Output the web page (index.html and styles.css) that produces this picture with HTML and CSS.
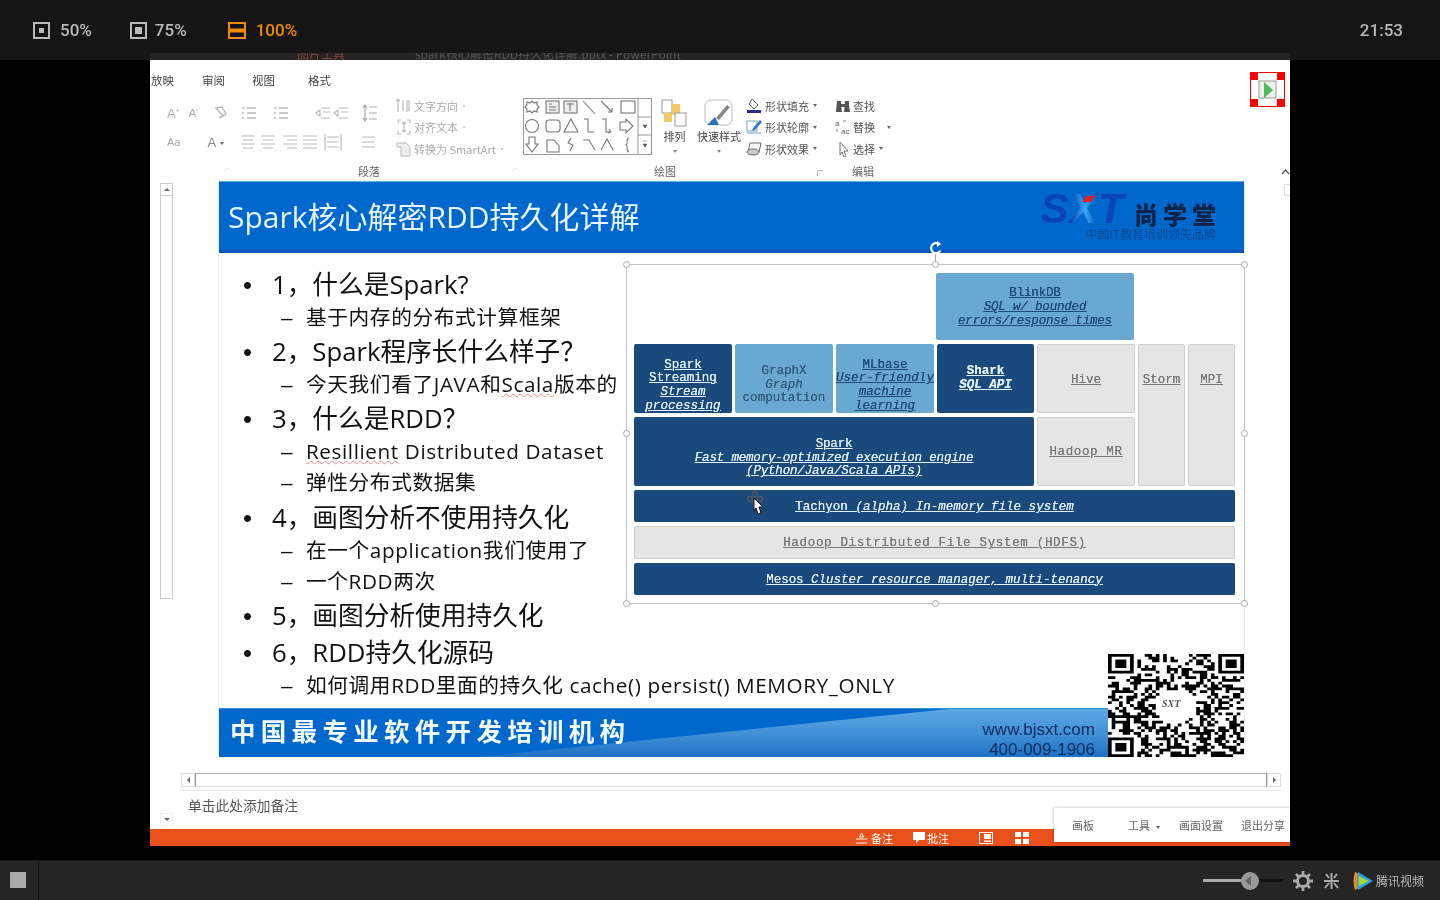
FILE: index.html
```html
<!DOCTYPE html>
<html>
	<head>
		<meta charset="UTF-8">
		<title>Spark核心解密RDD持久化详解</title>
		<link rel="stylesheet" href="styles.css">
	</head>
	<body>
		<header class="topbar">
			<div class="topbar-row">
				<div class="zoom-opt z50"><svg width="17" height="17" viewBox="0 0 17 17"><rect x="1" y="1" width="15" height="15" fill="none" stroke="#bbb" stroke-width="2"/><rect x="6" y="6" width="5" height="5" fill="#bbb"/></svg>50%</div>
				<div class="zoom-opt z75"><svg width="17" height="17" viewBox="0 0 17 17"><rect x="1" y="1" width="15" height="15" fill="none" stroke="#bbb" stroke-width="2"/><rect x="5" y="5" width="7" height="7" fill="#bbb"/></svg>75%</div>
				<div class="zoom-opt active"><svg width="18" height="17" viewBox="0 0 18 17"><rect x="1" y="1" width="16" height="15" fill="none" stroke="#f08a00" stroke-width="2"/><rect x="1" y="6.500" width="16" height="4" fill="#f08a00"/></svg>100%</div>
				<div class="clock">21:53</div>
			</div>
			<div class="titlestrip">
				<span class="tool-title">图片工具</span>
				<span class="doc-title">spark核心解密RDD持久化详解.pptx - PowerPoint</span>
			</div>
		</header>

		<main class="stage">
			<div class="win">
				<nav class="tabs">
					<span class="tab t1">放映</span>
					<span class="tab t2">审阅</span>
					<span class="tab t3">视图</span>
					<span class="tab t4">格式</span>
				</nav>

				<svg class="rec-badge" width="35" height="35" viewBox="0 0 35 35">
					<rect width="35" height="35" fill="#f00"/>
					<rect x="1" y="8" width="33" height="19" fill="#fff"/>
					<rect x="8" y="1" width="19" height="33" fill="#fff"/>
					<rect x="9" y="9" width="17" height="17" fill="#eee" stroke="#999"/>
					<path d="M14 10l9 8-9 8z" fill="#4cbb5a"/>
				</svg>

				<section class="ribbon">
					<div class="grp grp-font">
						<div class="ico-row r1">
							<span class="glyph">A<sup>+</sup></span>
							<span class="glyph small">A<sup>-</sup></span>
							<svg width="16" height="16" viewBox="0 0 16 16"><path d="M3 3l7 8 3-2-4-7zM6 13l4-2" fill="none" stroke="#bbb" stroke-width="1.5"/></svg>
						</div>
						<div class="ico-row r2">
							<span class="glyph light">Aa</span>
							<span class="glyph dark">A<i class="caret"></i></span>
						</div>
						<i class="launch faint"></i>
					</div>

					<div class="grp grp-para">
						<div class="para-icons">
							<div class="ico-row r1">
								<svg width="50" height="14" viewBox="0 0 50 14"><path d="M1 2h2M6 2h9M1 7h2M6 7h9M1 12h2M6 12h9M33 2h2M38 2h9M33 7h2M38 7h9M33 12h2M38 12h9" stroke="#bbb" stroke-width="1.3"/></svg>
								<svg class="gap1" width="34" height="14" viewBox="0 0 34 14"><path d="M1 7l4-3v6zM6 2h9M8 6h7M6 12h9M19 7l4-3v6zM24 2h9M26 6h7M24 12h9" fill="none" stroke="#bbb" stroke-width="1.2"/></svg>
								<svg class="gap2" width="16" height="18" viewBox="0 0 16 18"><path d="M3 1v16M1 4l2-3 2 3M1 14l2 3 2-3M7 3h8M7 9h8M7 15h8" fill="none" stroke="#aaa" stroke-width="1.2"/></svg>
							</div>
							<div class="ico-row r2">
								<svg width="102" height="16" viewBox="0 0 102 16"><path d="M0 2h14M2 6h10M0 10h14M2 14h10M20 2h14M22 6h10M20 10h14M22 14h10M42 2h14M46 6h10M42 10h14M46 14h10M62 2h14M62 6h14M62 10h14M62 14h14M84 0v16M100 0v16M86 3h12M86 8h12M86 13h12" stroke="#bbb" stroke-width="1.2" fill="none"/></svg>
								<svg class="gap3" width="14" height="14" viewBox="0 0 14 14"><path d="M0 2h13M0 7h13M0 12h13" stroke="#bbb" stroke-width="1.2"/></svg>
							</div>
						</div>
						<div class="text-cmds off">
							<div class="cmd"><svg width="16" height="16" viewBox="0 0 16 16"><path d="M2 1v13M0 3l2-2 2 2M7 2v11M11 2v12M13 2v11" fill="none" stroke="#bbb" stroke-width="1.2"/></svg>文字方向<i class="dot"></i></div>
							<div class="cmd"><svg width="16" height="16" viewBox="0 0 16 16"><path d="M2 4V1h3M11 1h3v3M2 12v3h3M11 15h3v-3M8 3v10M6 5l2-2 2 2M6 11l2 2 2-2" fill="none" stroke="#bbb" stroke-width="1.2"/></svg>对齐文本<i class="dot"></i></div>
							<div class="cmd"><svg width="16" height="16" viewBox="0 0 16 16"><path d="M1 2h9l4 4v9H5V6H1z" fill="#eee" stroke="#bbb"/></svg>转换为 SmartArt<i class="dot"></i></div>
						</div>
						<span class="grp-label">段落</span>
						<i class="launch faint"></i>
					</div>

					<div class="grp grp-draw">
						<svg class="gallery" width="129" height="57" viewBox="0 0 129 57">
							<rect x=".5" y=".5" width="128" height="56" fill="#fff" stroke="#999"/>
							<g fill="none" stroke="#777" stroke-width="1.1">
								<path d="M9 3l2 2 3-1 0 3 2 2-2 2 0 3-3-1-2 2-2-2-3 1 0-3-2-2 2-2 0-3 3 1z"/>
								<rect x="23" y="3" width="13" height="12" fill="#eee"/><path d="M26 6h3M26 9h7M26 12h7"/>
								<rect x="41" y="3" width="13" height="12" fill="#eee"/><path d="M47 5v8M44 6h7"/>
								<path d="M60 3l12 13M78 3l11 11M89 14v-4M89 14h-4"/>
								<rect x="98" y="3" width="14" height="12"/>
								<circle cx="9" cy="28" r="6.500"/>
								<rect x="23" y="22" width="14" height="12" rx="3"/>
								<path d="M48 21l7 13H41z"/>
								<path d="M61 21h4v13h6M79 21h4v13h5M86 31l2 3-3 1"/>
								<path d="M97 24h6v-3l7 7-7 7v-3h-6z"/>
								<path d="M6 39h6v7h3l-6 8-6-8h3z"/>
								<path d="M24 42h7l5 6v6H24z"/>
								<path d="M48 40l-3 5 5 2-3 6"/>
								<path d="M60 42h6l6 10M78 52l6-11 6 11M106 40c-4 1 0 6-3 7 3 1-1 6 3 7"/>
							</g>
							<g fill="none" stroke="#999">
								<path d="M115 .5v56M115 19h13M115 37h13"/>
							</g>
							<path d="M120 27h4l-2 3zM120 46h4l-2 3zM120 43h4" fill="#555" stroke="#555" stroke-width=".5"/>
						</svg>
						<div class="big-btn arrange">
							<svg width="28" height="28" viewBox="0 0 28 28"><rect x="1" y="1" width="10" height="13" fill="#fff" stroke="#999"/><rect x="11" y="5" width="8" height="11" fill="#f3c762"/><rect x="3" y="14" width="8" height="9" fill="#f3c762"/><rect x="14" y="14" width="11" height="13" fill="#fff" stroke="#999"/></svg>
							<span>排列</span>
							<i class="caret"></i>
						</div>
						<div class="big-btn quick">
							<svg width="30" height="28" viewBox="0 0 30 28"><rect x="1" y="1" width="27" height="25" rx="6" fill="#fff" stroke="#bbb"/><path d="M23 6L12 19l3 2L26 8z" fill="#888"/><path d="M3 26l8-8 4 8z" fill="#2f6fb5"/></svg>
							<span>快速样式</span>
							<i class="caret"></i>
						</div>
						<div class="text-cmds shape">
							<div class="cmd"><svg width="17" height="16" viewBox="0 0 17 16"><path d="M6 1l6 6-4 4-5-5z" fill="#fff" stroke="#666"/><rect x="1" y="12" width="14" height="3" fill="#2b2b8f"/></svg>形状填充<i class="caret"></i></div>
							<div class="cmd"><svg width="17" height="16" viewBox="0 0 17 16"><rect x="1" y="2" width="10" height="10" fill="none" stroke="#7ab"/><path d="M14 1L7 9l-1 3 3-1 7-8z" fill="#3a78c2"/><path d="M1 14h14" stroke="#bcd" stroke-width="2"/></svg>形状轮廓<i class="caret"></i></div>
							<div class="cmd"><svg width="17" height="16" viewBox="0 0 17 16"><path d="M4 2h11l-2 9H2z" fill="#fff" stroke="#666"/><ellipse cx="7" cy="11" rx="6" ry="3" fill="#ccc" stroke="#666"/></svg>形状效果<i class="caret"></i></div>
						</div>
						<span class="grp-label">绘图</span>
						<i class="launch draw-launch"></i>
					</div>

					<div class="grp grp-edit">
						<div class="text-cmds edit">
							<div class="cmd"><svg width="16" height="16" viewBox="0 0 16 16"><path d="M2 3h4v4l1 7H1zM10 3h4v4l1 7H9zM6 6h4v3H6z" fill="#555"/></svg>查找</div>
							<div class="cmd"><svg width="16" height="16" viewBox="0 0 16 16"><text x="0" y="7" class="svg-mini">a</text><text x="6" y="15" class="svg-mini">ac</text><path d="M8 2h3M2 10v3" stroke="#888"/></svg>替换<i class="caret far"></i></div>
							<div class="cmd"><svg width="16" height="16" viewBox="0 0 16 16"><path d="M5 1l8 9H9l2 5-2 1-2-5-2 3z" fill="#fff" stroke="#777"/></svg>选择<i class="caret"></i></div>
						</div>
						<span class="grp-label">编辑</span>
					</div>
					<svg class="collapse" width="9" height="6" viewBox="0 0 9 6"><path d="M1 5l3.500-4L8 5" fill="none" stroke="#555" stroke-width="1.2"/></svg>
				</section>

				<section class="workspace">
					<div class="vscroll">
						<span class="vbtn"><i class="tri up"></i></span>
						<span class="vthumb"></span>
						<span class="vbtn down"><i class="tri dn"></i></span>
					</div>

					<div class="middle">
						<article class="slide">
							<div class="slide-head">
								<h1>Spark核心解密RDD持久化详解</h1>
								<div class="brand">
									<div class="brand-top"><span class="brand-sxt">SXT</span><span class="brand-cn">尚学堂</span></div>
									<div class="brand-sub">中国IT教育培训领先品牌</div>
								</div>
							</div>

							<div class="slide-body">
								<ul class="outline">
									<li class="lv1">1，什么是Spark?</li>
									<li class="lv2">基于内存的分布式计算框架</li>
									<li class="lv1">2，Spark程序长什么样子？</li>
									<li class="lv2">今天我们看了JAVA和<span class="typo">Scala</span>版本的</li>
									<li class="lv1">3，什么是RDD？</li>
									<li class="lv2"><span class="typo">Resillient</span> Distributed Dataset</li>
									<li class="lv2">弹性分布式数据集</li>
									<li class="lv1 fourth">4，画图分析不使用持久化</li>
									<li class="lv2">在一个application我们使用了</li>
									<li class="lv2">一个RDD两次</li>
									<li class="lv1">5，画图分析使用持久化</li>
									<li class="lv1 wide">6，RDD持久化源码</li>
									<li class="lv2">如何调用RDD里面的持久化 cache() persist() MEMORY_ONLY</li>
								</ul>

								<div class="diagram">
									<span class="rotate-line"></span>
									<svg class="rotate" width="14" height="14" viewBox="0 0 14 14"><path d="M11.500 9.500A5 5 0 1 1 10 3" fill="none" stroke="#fff" stroke-width="2.200"/><path d="M8 0l4 3-4 3z" fill="#fff"/></svg>
									<i class="hd tl"></i><i class="hd tm"></i><i class="hd tr"></i>
									<i class="hd ml"></i><i class="hd mr"></i>
									<i class="hd bl"></i><i class="hd bm"></i><i class="hd br"></i>

									<div class="stack">
										<div class="box sky blink"><b>BlinkDB</b><em>SQL w/ bounded<br>errors/response times</em></div>
										<div class="box navy c1 low"><b>Spark<br>Streaming</b><em>Stream<br>processing</em></div>
										<div class="box sky c2 plain low2"><b>GraphX</b><em>Graph</em><span>computation</span></div>
										<div class="box sky c3 low"><b>MLbase</b><em>User-friendly<br>machine<br>learning</em></div>
										<div class="box navy c4"><b class="heavy">Shark</b><em class="heavy">SQL API</em></div>
										<div class="box grey hive"><span>Hive</span></div>
										<div class="box grey storm"><span>Storm</span></div>
										<div class="box grey mpi"><span>MPI</span></div>
										<div class="box navy spark"><b>Spark</b><em>Fast memory-optimized execution engine<br>(Python/Java/Scala APIs)</em></div>
										<div class="box grey hadoop"><span>Hadoop MR</span></div>
										<div class="box navy tachyon"><em><span class="up">Tachyon</span> (alpha) In-memory file system</em></div>
										<div class="box grey hdfs"><span>Hadoop Distributed File System (HDFS)</span></div>
										<div class="box navy mesos"><em><span class="up">Mesos</span> Cluster resource manager, multi-tenancy</em></div>
									</div>

									<svg class="cursor" width="20" height="26" viewBox="0 0 20 26">
										<g fill="none" stroke="#556" stroke-width="1.300"><circle cx="9" cy="3" r="2.500"/><circle cx="4" cy="8" r="2.500"/><circle cx="14" cy="8" r="2.500"/><circle cx="9" cy="12" r="2.500"/></g>
										<path d="M8 7l9 9h-4l2 6-3 1-2-6-2 3z" fill="#fff" stroke="#111"/>
									</svg>
								</div>
							</div>

							<footer class="slide-foot">
								<strong>中国最专业软件开发培训机构</strong>
								<div class="contact"><span>www.bjsxt.com</span><span>400-009-1906</span></div>
							</footer>

							<div class="qr">
								<svg id="qr" width="136" height="103" viewBox="0 0 37 37" preserveAspectRatio="none"></svg>
								<span class="qr-logo">SXT</span>
							</div>
						</article>

						<div class="hscroll">
							<span class="hbtn"><i class="tri lf"></i></span>
							<span class="htrack"></span>
							<span class="hbtn"><i class="tri rt"></i></span>
						</div>

						<div class="notes">单击此处添加备注</div>
					</div>

					<div class="rail"><span class="rail-btn"></span></div>
				</section>

				<div class="statusbar">
					<span class="st-item"><svg width="11" height="12" viewBox="0 0 11 12"><path d="M5.500 1l2 4h-4zM0 7h11M0 11h11" fill="none" stroke="#fff"/></svg>备注</span>
					<span class="st-item"><svg width="12" height="12" viewBox="0 0 12 12"><path d="M0 0h12v8H6l-3 3V8H0z" fill="#fff"/></svg>批注</span>
					<svg class="st-view" width="14" height="12" viewBox="0 0 14 12"><rect x=".5" y=".5" width="13" height="11" fill="none" stroke="#fff"/><rect x="5" y="2" width="7" height="5" fill="#fff"/><rect x="5" y="8.500" width="7" height="1.500" fill="#fff"/></svg>
					<svg class="st-view" width="14" height="12" viewBox="0 0 14 12"><path d="M0 0h6v5H0zM8 0h6v5H8zM0 7h6v5H0zM8 7h6v5H8z" fill="#fff"/></svg>
				</div>

				<div class="share-bar">
					<span class="sb1">画板</span>
					<span class="sb2">工具<i class="caret"></i></span>
					<span class="sb3">画面设置</span>
					<span class="sb4">退出分享</span>
				</div>
			</div>
		</main>

		<footer class="playbar">
			<span class="stop"></span>
			<div class="play-right">
				<div class="volume"><span class="vol-on"></span><span class="vol-knob"></span><span class="vol-off"></span></div>
				<svg class="gear" width="20" height="20" viewBox="0 0 20 20"><circle cx="10" cy="10" r="5.500" fill="none" stroke="#aaa" stroke-width="3"/><path d="M10 0v4M10 16v4M0 10h4M16 10h4M3 3l3 3M14 14l3 3M17 3l-3 3M6 14l-3 3" stroke="#aaa" stroke-width="2.800"/></svg>
				<svg class="shrink" width="15" height="16" viewBox="0 0 15 16"><path d="M7.500 0v16M0 8h15M2 1l3 4M13 1l-3 4M1 15l4-5M14 15l-4-5" stroke="#aaa" stroke-width="2"/></svg>
				<svg class="tx-logo" width="20" height="20" viewBox="0 0 20 20"><path d="M2 1l17 9-17 9c-2-6-2-12 0-18z" fill="#f08a1d"/><path d="M5 1l15 9-15 9c-1.500-6-1.500-12 0-18z" fill="#2b9fe0"/><path d="M6 5l10 5-10 5c-.8-3-.8-7 0-10z" fill="#a5d63a"/></svg>
				<span class="tx-name">腾讯视频</span>
			</div>
		</footer>
		<script src="qr.js"></script>
	</body>
</html>
```

FILE: styles.css
```css
*, *:before, *:after {
	box-sizing: border-box;
}
html {
	font-family: "Noto Sans CJK SC", "Liberation Sans", sans-serif;
	font-size: 12px;
}
body {
	margin: 0;
	width: 1440px;
	height: 900px;
	overflow: hidden;
	background: #000;
}
i, em {
	font-style: normal;
}

/* top bar */
.topbar {
	height: 60px;
	background: #151515;
	color: #b9b9b9;
	filter: blur(.4px);
}
.topbar-row {
	display: flex;
	align-items: center;
	height: 53px;
	padding: 8px 37px 0 33px;
	font: 500 17px/1 Roboto, sans-serif;
}
.zoom-opt {
	display: flex;
	align-items: center;
	gap: 10px;
	margin-right: 38px;
}
.z75 {
	gap: 8px;
	margin-right: 41px;
}
.zoom-opt.active {
	color: #f08a00;
}
.clock {
	margin-left: auto;
}
.titlestrip {
	position: relative;
	height: 7px;
	margin: 0 150px;
	background: #242424;
	overflow: hidden;
	font-size: 12px;
	line-height: 8px;
}
.tool-title {
	position: absolute;
	left: 147px;
	top: -3px;
	color: #8a4040;
}
.doc-title {
	position: absolute;
	left: 265px;
	top: -3px;
	color: #555;
}

/* window */
.stage {
	height: 800px;
	padding-bottom: 14px;
}
.win {
	position: relative;
	display: flex;
	flex-direction: column;
	width: 1140px;
	height: 786px;
	margin: 0 auto;
	background: #fff;
	overflow: hidden;
	filter: blur(.45px);
}
.tabs {
	display: flex;
	height: 32px;
	flex: none;
	align-items: center;
	padding-top: 8px;
	color: #444;
	font-size: 11.500px;
}
.t1 { margin-left: 1px; }
.t2 { margin-left: 28px; }
.t3 { margin-left: 27px; }
.t4 { margin-left: 33px; }
.rec-badge {
	position: absolute;
	top: 12px;
	left: 1100px;
}

/* ribbon */
.ribbon {
	display: flex;
	height: 89px;
	flex: none;
	color: #666;
	font-size: 11px;
}
.grp {
	position: relative;
	height: 89px;
	flex: none;
}
.grp-label {
	position: absolute;
	top: 71px;
	font-size: 11px;
	line-height: 16px;
	color: #666;
}
.launch {
	position: absolute;
	right: 6px;
	top: 76px;
	width: 6px;
	height: 6px;
	border-left: 1px solid #bbb;
	border-top: 1px solid #bbb;
}
.launch.faint {
	width: 4px;
	height: 4px;
	border-color: #eee;
}
.draw-launch {
	right: 33px;
	top: 78px;
}
.ico-row {
	display: flex;
	align-items: center;
}
.grp-font {
	width: 85px;
	padding: 14px 0 0 17px;
}
.grp-font .r1 {
	gap: 9px;
	height: 14px;
}
.grp-font .r1 svg {
	margin-left: 6px;
}
.grp-font .r2 {
	gap: 27px;
	height: 14px;
	margin-top: 15px;
}
.glyph {
	color: #aaa;
	font: 13px/1 "Liberation Sans", sans-serif;
	white-space: nowrap;
}
.glyph.small {
	font-size: 11px;
}
.glyph.light {
	font-size: 11px;
}
.glyph.dark {
	color: #888;
	font-size: 13px;
}
.glyph sup {
	font-size: 7px;
	line-height: 0;
}
.caret {
	display: inline-block;
	width: 0;
	height: 0;
	margin-left: 4px;
	vertical-align: middle;
	border-left: 2.500px solid transparent;
	border-right: 2.500px solid transparent;
	border-top: 3px solid #666;
}
.dot {
	display: inline-block;
	width: 2px;
	height: 2px;
	margin-left: 5px;
	background: #ccc;
	vertical-align: middle;
}
.grp-para {
	display: flex;
	width: 288px;
	padding-left: 6px;
}
.grp-para .grp-label { left: 123px; }
.para-icons {
	width: 155px;
	padding-top: 12px;
}
.para-icons .r2 {
	margin-top: 12px;
}
.gap1 { margin-left: 24px; }
.gap2 { margin-left: 13px; }
.gap3 { margin-left: 19px; }
.text-cmds {
	display: flex;
	flex-direction: column;
	padding-top: 3px;
}
.cmd {
	display: flex;
	align-items: center;
	height: 21.500px;
	white-space: nowrap;
	color: #555;
}
.cmd svg {
	flex: none;
	margin-right: 2px;
}
.off .cmd {
	color: #aaa;
}
.grp-draw {
	display: flex;
	width: 333px;
}
.grp-draw .grp-label { left: 131px; }
.gallery {
	flex: none;
	margin-top: 6px;
}
.big-btn {
	display: flex;
	flex-direction: column;
	align-items: center;
	width: 44px;
	padding-top: 7px;
	color: #444;
	font-size: 11px;
	line-height: 16px;
}
.big-btn .caret {
	margin: 6px 0 0;
	border-top-color: #888;
}
.arrange { width: 45px; }
.arrange span { margin-top: 1px; }
.quick span { margin-top: 1px; white-space: nowrap; }
.shape {
	margin-left: 5px;
}
.grp-edit {
	width: 100px;
	margin-left: -22px;
}
.grp-edit .grp-label { left: 18px; }
.edit {
	padding-left: 1px;
}
.caret.far {
	margin-left: 12px;
}
.svg-mini {
	font: 8px "Liberation Sans", sans-serif;
	fill: #666;
}
.collapse {
	position: absolute;
	left: 1131px;
	top: 109px;
}

/* workspace */
.workspace {
	display: flex;
	flex: 1;
	min-height: 0;
}
.vscroll {
	display: flex;
	flex-direction: column;
	width: 31px;
	flex: none;
	padding: 2px 0 3px 10px;
}
.vbtn {
	display: flex;
	justify-content: center;
	align-items: center;
	width: 13px;
	height: 13px;
	flex: none;
	border: 1px solid #ccc;
}
.vbtn.down {
	margin-top: auto;
	border: 1px solid #f0f0f0;
}
.vthumb {
	width: 13px;
	height: 403px;
	border: 1px solid #ccc;
	border-top: 0;
}
.tri {
	display: block;
	width: 0;
	height: 0;
	border: 3px solid transparent;
}
.tri.up { border-bottom-color: #666; margin-top: -3px; }
.tri.dn { border-top-color: #666; margin-top: 3px; }
.tri.lf { border-right-color: #666; margin-left: -3px; }
.tri.rt { border-left-color: #666; margin-left: 3px; }
.middle {
	display: flex;
	flex-direction: column;
	width: 1100px;
	flex: none;
	min-width: 0;
}
.slide {
	position: relative;
	display: flex;
	flex-direction: column;
	width: 1026px;
	height: 576px;
	margin-left: 38px;
	flex: none;
	border-right: 1px solid #eee;
	box-shadow: -1px 0 0 #eee;
}
.slide-head {
	display: flex;
	justify-content: space-between;
	height: 72px;
	flex: none;
	padding: 0 28px 0 9px;
	background: #0068cc;
	border-top: 1px solid #4fb0d8;
	border-bottom: 3px solid #0058b4;
}
.slide-head h1 {
	margin: 15px 0 0;
	color: #e9f5ff;
	font-family: "Open Sans", "Noto Sans CJK SC", sans-serif;
	font-size: 30px;
	line-height: 40px;
	font-weight: 400;
	white-space: nowrap;
}
.brand {
	position: relative;
	width: 190px;
	padding-top: 8px;
	text-align: right;
}
.brand:before {
	content: "";
	position: absolute;
	left: 58px;
	top: 14px;
	width: 9px;
	height: 6px;
	background: #e02020;
	transform: skewX(-30deg);
}
.brand-top {
	display: flex;
	justify-content: flex-end;
	align-items: center;
	gap: 7px;
	height: 36px;
}
.brand-sxt {
	background: linear-gradient(90deg, #0a3fb0, #0a46b8 35%, #38a8f0 52%, #0a44b4 68%, #0c48b8);
	-webkit-background-clip: text;
	background-clip: text;
	color: transparent;
	font: italic 700 43px/36px "Liberation Sans", sans-serif;
	letter-spacing: 0;
	padding: 0 3px 0 0;
}
.brand-cn {
	color: #0e2446;
	font-size: 24px;
	font-weight: 900;
	letter-spacing: 5px;
	line-height: 24px;
	margin-right: -5px;
	padding-top: 12px;
}
.brand-sub {
	margin-top: 1px;
	color: #0b4a92;
	font-size: 12px;
	line-height: 14px;
	white-space: nowrap;
}
.slide-body {
	display: flex;
	height: 455px;
	flex: none;
}
.outline {
	width: 407px;
	flex: none;
	margin: 0;
	padding: 13px 0 0;
	list-style: none;
	color: #111;
	font-family: "Open Sans", "Noto Sans CJK SC", sans-serif;
	white-space: nowrap;
}
.lv1 {
	height: 34px;
	margin-top: 2px;
	padding-left: 24px;
	font-size: 25.700px;
	line-height: 34px;
}
.lv1.fourth {
	margin-top: 3px;
}
.lv1.wide {
	margin-top: 3px;
}
.lv1:before {
	content: "•";
	display: inline-block;
	width: 29px;
	font-family: "Liberation Sans", sans-serif;
}
.lv2 {
	height: 31px;
	padding-left: 62px;
	font-size: 20.700px;
	letter-spacing: .6px;
	line-height: 31px;
}
.lv2:before {
	content: "–";
	display: inline-block;
	width: 25px;
	font-family: "Liberation Sans", sans-serif;
}
.typo {
	text-decoration: underline wavy #e88;
	text-decoration-thickness: 1px;
}
.diagram {
	position: relative;
	width: 619px;
	height: 340px;
	margin-top: 11px;
	padding: 8px 7px;
	flex: none;
	border: 1px solid #c4c4c4;
}
.stack {
	display: grid;
	grid-template-columns: 98px 98px 98px 97px 98px 47px 47px;
	grid-template-rows: 67px 69px 69px 32px 33px 32px;
	column-gap: 3px;
	row-gap: 4px;
	font: 12.550px/13.700px "Liberation Mono", monospace;
	text-shadow: 0 0 .6px currentColor;
}
.box {
	display: flex;
	flex-direction: column;
	align-items: center;
	justify-content: center;
	border-radius: 2px;
	text-align: center;
	text-decoration: underline;
	white-space: nowrap;
	overflow: hidden;
}
.box b {
	font-weight: 400;
}
.box em {
	font-style: italic;
}
.box .up {
	font-style: normal;
}
.box .heavy {
	font-weight: 700;
}
.navy {
	background: #1a4a7c;
	color: #e4f1fb;
}
.sky {
	background: #69a9d1;
	color: #1d4a78;
}
.sky.plain {
	color: #33597c;
	text-decoration: none;
}
.grey {
	background: #e6e5e6;
	color: #777;
	border: 1px solid #cfcfcf;
}
.low {
	padding-top: 15px;
}
.low2 {
	padding-top: 14px;
}
.blink { grid-column: 4 / 6; grid-row: 1; width: 198px; margin-left: -1px; padding-top: 3px; letter-spacing: -.2px; }
.c1 { grid-column: 1; grid-row: 2; }
.c2 { grid-column: 2; grid-row: 2; }
.c3 { grid-column: 3; grid-row: 2; }
.c4 { grid-column: 4; grid-row: 2; }
.hive { grid-column: 5; grid-row: 2; padding-top: 4px; }
.storm { grid-column: 6; grid-row: 2 / 4; justify-content: flex-start; padding-top: 29px; }
.mpi { grid-column: 7; grid-row: 2 / 4; justify-content: flex-start; padding-top: 29px; }
.spark { grid-column: 1 / 5; grid-row: 3; padding-top: 14px; letter-spacing: -.2px; }
.hadoop { grid-column: 5; grid-row: 3; padding-top: 3px; letter-spacing: .6px; }
.tachyon { grid-column: 1 / 8; grid-row: 4; padding-top: 4px; }
.hdfs { grid-column: 1 / 8; grid-row: 5; padding-top: 3px; letter-spacing: .65px; }
.mesos { grid-column: 1 / 8; grid-row: 6; padding-top: 3px; letter-spacing: -.05px; }
.hd {
	position: absolute;
	width: 7px;
	height: 7px;
	background: #fff;
	border: 1px solid #aaa;
	border-radius: 50%;
}
.tl { left: -4px; top: -4px; }
.tm { left: 305px; top: -4px; }
.tr { right: -4px; top: -4px; }
.ml { left: -4px; top: 165px; }
.mr { right: -4px; top: 165px; }
.bl { left: -4px; bottom: -4px; }
.bm { left: 305px; bottom: -4px; }
.br { right: -4px; bottom: -4px; }
.rotate-line {
	position: absolute;
	left: 308px;
	top: -12px;
	width: 1px;
	height: 11px;
	background: #aaa;
}
.rotate {
	position: absolute;
	left: 302px;
	top: -24px;
}
.cursor {
	position: absolute;
	left: 119px;
	top: 226px;
}
.slide-foot {
	position: relative;
	z-index: 0;
	display: flex;
	justify-content: space-between;
	width: 889px;
	height: 49px;
	flex: none;
	padding: 0 13px 0 11px;
	background: #0068cc;
	border-top: 1px solid #2f8fd8;
}
.slide-foot:before {
	content: "";
	position: absolute;
	z-index: -1;
	inset: 0;
	background: linear-gradient(#5fa8e4, #3f8fd6 55%, #1d70c4);
	clip-path: polygon(260px 100%, 730px 0, 100% 0, 100% 100%);
}
.slide-foot strong {
	color: #f4fbff;
	font-size: 25.500px;
	font-weight: 700;
	letter-spacing: 5.300px;
	line-height: 41px;
	white-space: nowrap;
}
.contact {
	display: flex;
	flex-direction: column;
	align-items: flex-end;
	height: 48px;
	padding-top: 11px;
	color: #0c2a5c;
	font: 17px/19px "Liberation Sans", sans-serif;
}
.contact span + span {
	margin-top: 1px;
}
.qr {
	position: absolute;
	right: 0;
	bottom: 0;
	width: 136px;
	height: 103px;
	background: #fff;
}
.qr svg {
	display: block;
}
.qr-logo {
	position: absolute;
	left: 54px;
	top: 44px;
	color: #555;
	font: italic 700 10px/12px "Liberation Serif", serif;
}
.hscroll {
	display: flex;
	height: 14px;
	margin: 16px 0 0 0;
	flex: none;
	width: 1100px;
}
.hbtn {
	display: flex;
	align-items: center;
	justify-content: center;
	width: 14px;
	flex: none;
	border: 1px solid #ddd;
}
.htrack {
	flex: 1;
	border-top: 1px solid #aaa;
	border-bottom: 1px solid #ddd;
	border-left: 1px solid #999;
	border-right: 1px solid #999;
}
.notes {
	flex: 1;
	margin-top: 3px;
	padding: 5px 0 0 7px;
	border-top: 1px solid #e6e6ee;
	color: #555;
	font-size: 13.750px;
	line-height: 18px;
}
.rail {
	flex: 1;
	padding-top: 3px;
	position: relative;
}
.rail-btn {
	display: block;
	width: 7px;
	height: 12px;
	margin-left: 3px;
	border: 1px solid #ddd;
}
.statusbar {
	display: flex;
	align-items: center;
	height: 17px;
	flex: none;
	padding-left: 706px;
	background: #e9501a;
	color: #fff;
	font-size: 11px;
}
.st-item {
	display: flex;
	align-items: center;
	gap: 4px;
	margin-right: 20px;
}
.st-item + .st-item {
	gap: 2px;
	margin-right: 30px;
}
.st-view {
	margin-right: 22px;
}
.share-bar {
	position: absolute;
	left: 904px;
	top: 748px;
	width: 240px;
	height: 34px;
	background: #fff;
	box-shadow: 0 0 3px rgba(0,0,0,.3);
	color: #666;
	font-size: 11px;
	line-height: 34px;
	white-space: nowrap;
}
.share-bar span {
	position: absolute;
	top: 0;
}
.sb1 { left: 18px; }
.sb2 { left: 74px; }
.sb2 .caret { margin-left: 6px; }
.sb3 { left: 125px; }
.sb4 { left: 187px; }

/* bottom bar */
.playbar {
	display: flex;
	align-items: center;
	justify-content: space-between;
	height: 40px;
	background: #252525;
	border-top: 1px solid #1c1c1c;
	padding-right: 16px;
	filter: blur(.4px);
}
.stop {
	width: 39px;
	height: 39px;
	border-right: 1px solid #111;
	background: linear-gradient(#aaa, #aaa) 10px 11px / 16px 16px no-repeat;
}
.play-right {
	display: flex;
	align-items: center;
}
.volume {
	display: flex;
	align-items: center;
	width: 80px;
	margin-right: 10px;
}
.vol-on {
	width: 38px;
	height: 3px;
	background: #aaa;
}
.vol-knob {
	position: relative;
	width: 18px;
	height: 18px;
	flex: none;
	border-radius: 50%;
	background: #999;
}
.vol-knob:after {
	content: "";
	position: absolute;
	left: 4px;
	top: 4px;
	border: 5px solid transparent;
	border-left: 0;
	border-right: 6px solid #666;
}
.vol-off {
	flex: 1;
	height: 3px;
	background: #111;
}
.shrink {
	margin-left: 11px;
}
.tx-logo {
	margin-left: 14px;
}
.tx-name {
	margin-left: 3px;
	color: #bbb;
	font-size: 12px;
}
```

FILE: qr.js
```js
// fake qr modules, same picture every run
var svg = document.getElementById('qr');
var size = 37;
var seed = 20181;
var d = '';

function next() {
	seed = (seed * 1103515245 + 12345) & 0x7fffffff;
	return (seed >> 16) & 1;
}
function finder(x, y) {
	d += 'M' + x + ' ' + y + 'h7v7h-7zM' + (x + 1) + ' ' + (y + 1) + 'v5h5v-5zM' + (x + 2) + ' ' + (y + 2) + 'h3v3h-3z';
}
function reserved(x, y) {
	if(x < 8 && y < 8) return true;
	if(x > size - 9 && y < 8) return true;
	if(x < 8 && y > size - 9) return true;
	var dx = x - 18, dy = y - 18;
	return dx * dx + dy * dy < 36;
}

for(var y = 0; y < size; y++) {
	for(var x = 0; x < size; x++) {
		if(next() && !reserved(x, y)) d += 'M' + x + ' ' + y + 'h1v1h-1z';
	}
}
finder(0, 0);
finder(size - 7, 0);
finder(0, size - 7);

var path = document.createElementNS('http://www.w3.org/2000/svg', 'path');
path.setAttribute('d', d);
path.setAttribute('fill', '#000');
path.setAttribute('fill-rule', 'evenodd');
svg.appendChild(path);
```
